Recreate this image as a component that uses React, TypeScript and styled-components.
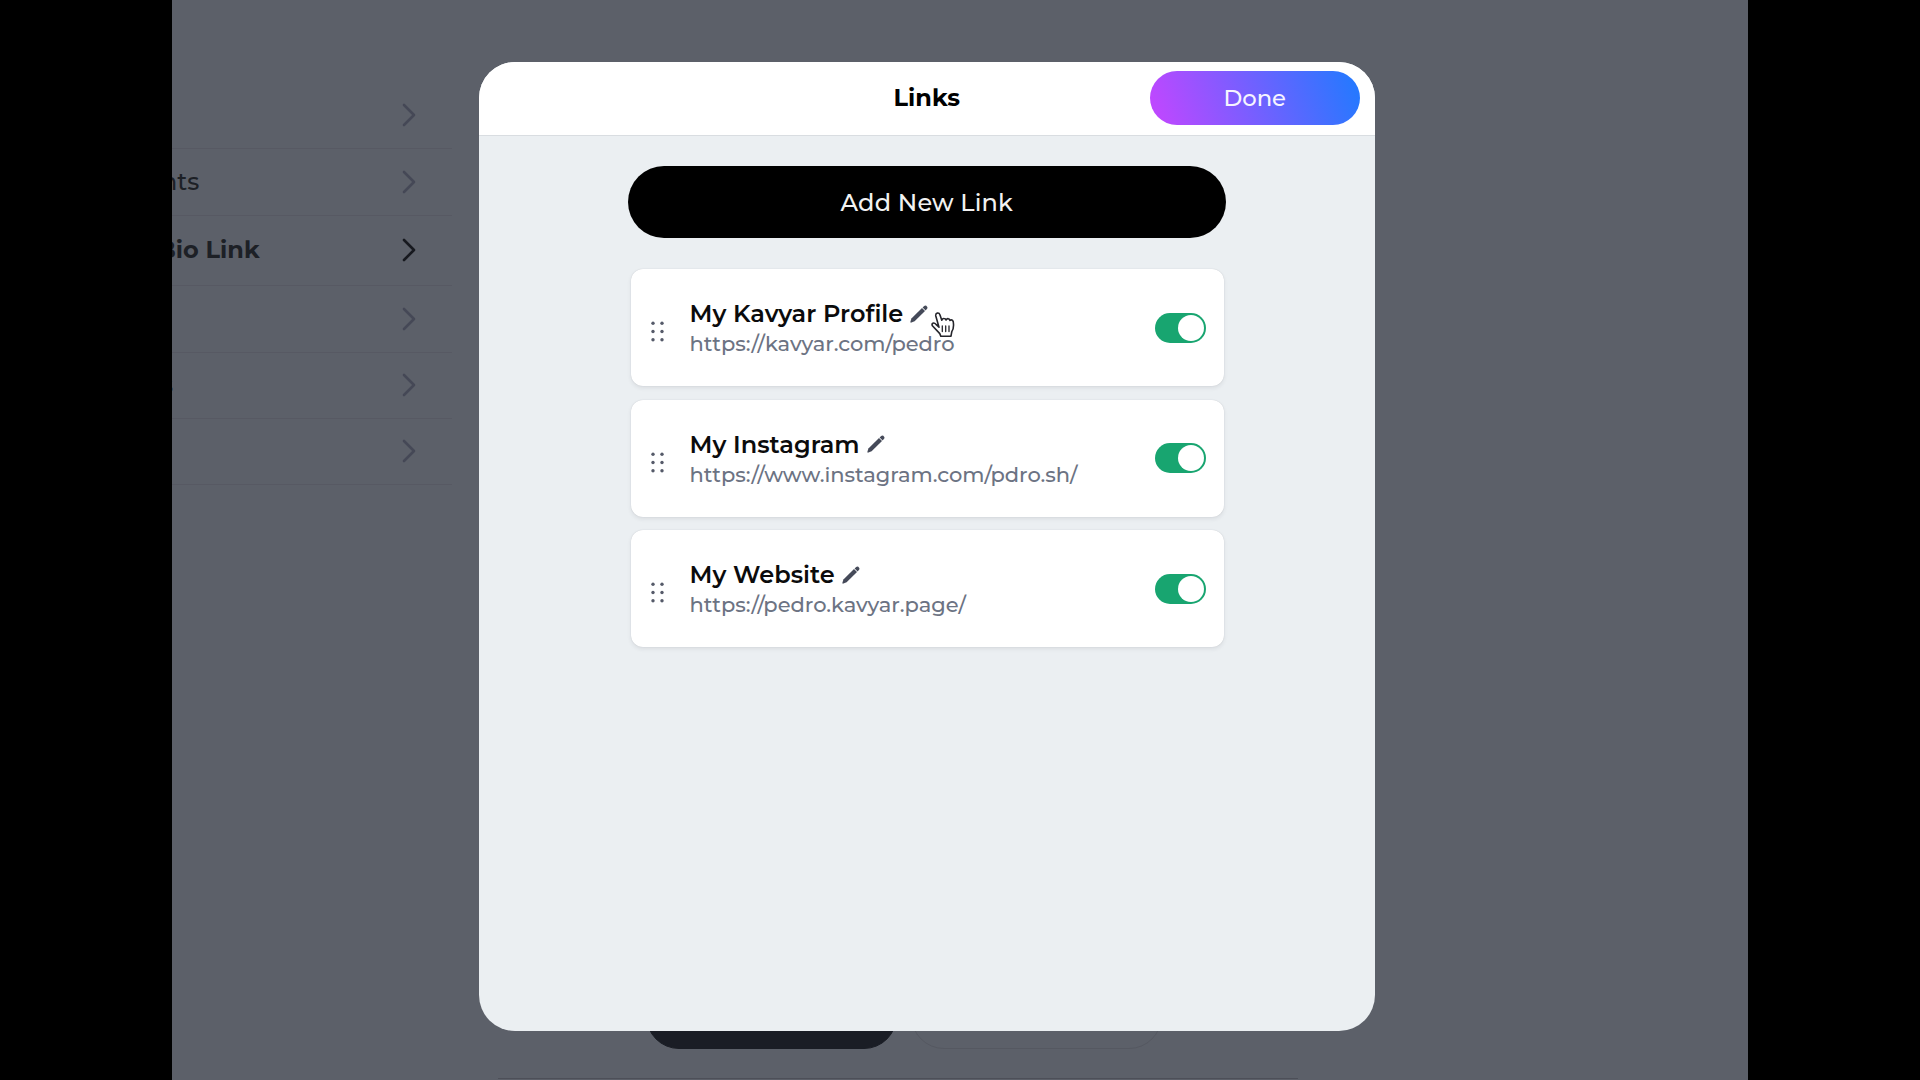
import styled, {createGlobalStyle, css} from "styled-components";

const theme = {
    colors: {
        backdrop: "#5c6069",
        backdropLine: "#575963",
        backdropText: "#1d2026",
        chevron: "#454856",
        surface: "#ebeff2",
        card: "#ffffff",
        text: "#0b0b0c",
        muted: "#6c7383",
        icon: "#454a59",
        green: "#18a570",
    },
    font: `"Montserrat", "Inter", "Liberation Sans", sans-serif`,
}

const menu = [
    {height: 67, label: ""},
    {height: 67, label: "nts", offset: -11},
    {height: 70, label: "Bio Link", offset: -14.5, active: true},
    {height: 67, label: ""},
    {height: 66, label: "s", offset: -11},
    {height: 66, label: ""},
]

const links = [
    {title: "My Kavyar Profile", url: "https://kavyar.com/pedro", cursor: true},
    {title: "My Instagram", url: "https://www.instagram.com/pdro.sh/"},
    {title: "My Website", url: "https://pedro.kavyar.page/"},
]

const Chevron = () => (
    <svg width="14" height="24" viewBox="0 0 14 24" fill="none">
        <path d="M2 2 L12 12 L2 22" stroke="currentColor" strokeWidth="2.6" strokeLinecap="round" strokeLinejoin="round"/>
    </svg>
)

const Pencil = () => (
    <svg width="18" height="18" viewBox="0 0 18 18" fill="currentColor">
        <path d="M12 3 L15 6 L4.6 16.3 L1.4 17.6 Q0.3 17.9 0.4 16.7 L1.4 13.5 Z"/>
        <path d="M12.6 2.4 L14.2 0.9 Q15.2 0 16.3 0.8 L17.1 1.7 Q18 2.8 17.1 3.8 L15.6 5.4 Z"/>
    </svg>
)

const Grip = () => (
    <svg width="13" height="21" viewBox="0 0 13 21" fill="currentColor">
        {[2.2, 10.5, 18.8].map(y => [2, 11].map(x => <circle key={`${x}-${y}`} cx={x} cy={y} r="1.7"/>))}
    </svg>
)

const HandCursor = () => (
    <svg width="24" height="26" viewBox="0 0 24 26" fill="#fff" stroke="#25252b" strokeWidth="1.6" strokeLinejoin="round" strokeLinecap="round">
        <path d="M8 15.2 L4.8 4 Q4.4 1.6 6.3 1.1 Q8.2 0.7 9 2.9 L10.8 8.2 Q11.5 6.3 13.1 6.5 Q14.5 6.6 15 8 Q16 6.3 17.4 6.7 Q18.7 7 19 8.5 Q20.3 7.4 21.5 8.4 Q22.5 9.3 22.5 12 Q22.8 16.5 20.8 19.6 L20 24.2 L9.8 24.2 L8.8 21.6 L1.4 13.8 Q0.5 12 1.9 11.2 Q3.3 10.5 5 12.3 Z"/>
        <path d="M11.3 14 L11.3 19.6 M14.7 14 L14.7 19.6 M18 14 L18 19.6" strokeWidth="1.3"/>
    </svg>
)

const App = () => {
    return (
        <Screen>
            <GlobalStyle/>
            <Stage>
                <Sidebar>
                    {menu.map((item, i) => (
                        <MenuRow key={i} $height={item.height} $active={item.active}>
                            <MenuLabel $offset={item.offset}>{item.label}</MenuLabel>
                            <Chevron/>
                        </MenuRow>
                    ))}
                </Sidebar>
                <Preview>
                    <PreviewActions>
                        <PreviewButton $filled/>
                        <PreviewButton/>
                    </PreviewActions>
                </Preview>
            </Stage>
            <Overlay>
                <Modal>
                    <ModalHeader>
                        <ModalTitle>Links</ModalTitle>
                        <DoneButton>Done</DoneButton>
                    </ModalHeader>
                    <ModalBody>
                        <AddButton>Add New Link</AddButton>
                        <LinkList>
                            {links.map(link => (
                                <LinkCard key={link.title}>
                                    <GripHandle><Grip/></GripHandle>
                                    <LinkInfo>
                                        <LinkTitle>
                                            {link.title}
                                            <EditButton><Pencil/></EditButton>
                                        </LinkTitle>
                                        <LinkUrl>{link.url}</LinkUrl>
                                    </LinkInfo>
                                    <Toggle><Knob/></Toggle>
                                    {link.cursor && <Pointer><HandCursor/></Pointer>}
                                </LinkCard>
                            ))}
                        </LinkList>
                    </ModalBody>
                </Modal>
            </Overlay>
        </Screen>
    );
};

export default App;

const GlobalStyle = createGlobalStyle`
    *, *::before, *::after {
        box-sizing: border-box;
    }

    body {
        margin: 0;
        background: #000;
        font-family: ${theme.font};
        overflow: hidden;
    }

    svg {
        display: block;
        flex-shrink: 0;
    }

    h2, h3, p {
        margin: 0;
    }

    button {
        font-family: inherit;
        border: none;
        padding: 0;
        background: none;
    }
`

const Screen = styled.div`
    position: relative;
    width: 1920px;
    height: 1080px;
    background: #000;
`

const Stage = styled.div`
    display: flex;
    gap: 46px;
    width: 1576px;
    height: 1080px;
    margin: 0 auto;
    overflow: hidden;
    background: ${theme.colors.backdrop};
`

const Sidebar = styled.nav`
    width: 280px;
    padding-top: 81.5px;
`

const MenuRow = styled.div<{ $height: number; $active?: boolean }>`
    display: flex;
    align-items: center;
    justify-content: space-between;
    height: ${({$height}) => $height}px;
    padding-right: 36px;
    border-bottom: 1px solid ${theme.colors.backdropLine};
    font-weight: 500;
    color: ${theme.colors.chevron};

    ${({$active}) => $active && css`
        color: #17191f;
        font-weight: 700;
    `}
`

const MenuLabel = styled.span<{ $offset?: number }>`
    margin-left: ${({$offset}) => $offset ?? 0}px;
    font-size: 24px;
    line-height: 30px;
    color: ${theme.colors.backdropText};
`

const Preview = styled.div`
    display: flex;
    flex-direction: column;
    justify-content: flex-end;
    width: 800px;
    height: 1079px;
    border-bottom: 1px solid #4d4f58;
    padding-bottom: 29px;
`

const PreviewActions = styled.div`
    display: flex;
    gap: 14px;
    padding-left: 148px;
`

const PreviewButton = styled.div<{ $filled?: boolean }>`
    width: 251px;
    height: 66px;
    border-radius: 33px;
    border: 1px solid ${({$filled}) => $filled ? "#1a1d25" : "#555861"};
    background: ${({$filled}) => $filled ? "#1a1d25" : "transparent"};
`

const Overlay = styled.div`
    position: absolute;
    inset: 0;
    padding: 61.5px 0 0 479px;
`

const Modal = styled.section`
    width: 895.5px;
    height: 969.5px;
    border-radius: 36px;
    overflow: hidden;
    background: ${theme.colors.surface};
`

const ModalHeader = styled.header`
    display: grid;
    grid-template-columns: 1fr auto 1fr;
    align-items: center;
    height: 74px;
    padding-right: 15px;
    border-bottom: 1px solid #d9dde1;
    background: #fff;
`

const ModalTitle = styled.h2`
    grid-column: 2;
    padding-left: 15px;
    font-size: 24px;
    line-height: 30px;
    font-weight: 700;
    color: #000;
`

const DoneButton = styled.button`
    justify-self: end;
    width: 209.5px;
    height: 54px;
    border-radius: 27px;
    background: linear-gradient(70deg, #bd48ff 5%, #2778ff 95%);
    color: #f6f4ff;
    font-size: 22.7px;
    font-weight: 500;
`

const ModalBody = styled.div`
    display: flex;
    flex-direction: column;
    align-items: center;
    padding-top: 30.5px;
`

const AddButton = styled.button`
    width: 597.5px;
    height: 71.5px;
    padding-top: 1px;
    border-radius: 36px;
    background: #000;
    color: #f2f2f2;
    font-size: 24px;
    font-weight: 500;
    letter-spacing: 0.15px;
`

const LinkList = styled.div`
    display: flex;
    flex-direction: column;
    gap: 13.5px;
    width: 593px;
    margin: 31.5px 0 0 2px;
`

const LinkCard = styled.article`
    position: relative;
    display: flex;
    align-items: center;
    height: 117px;
    padding: 0 18.5px 0 20px;
    border-radius: 12px;
    background: ${theme.colors.card};
    box-shadow: 0 2px 4px rgba(40, 45, 60, 0.09), 0 0 1px rgba(40, 45, 60, 0.2);
`

const GripHandle = styled.div`
    margin-top: 8px;
    color: #555a69;
`

const LinkInfo = styled.div`
    flex: 1;
    margin-left: 25.3px;
    padding-top: 2px;
`

const LinkTitle = styled.h3`
    display: flex;
    align-items: center;
    font-size: 24px;
    line-height: 30px;
    font-weight: 600;
    letter-spacing: 0.03px;
    color: ${theme.colors.text};
`

const EditButton = styled.button`
    margin: 0 0 1px 7px;
    color: ${theme.colors.icon};
`

const LinkUrl = styled.p`
    font-size: 21px;
    line-height: 29px;
    font-weight: 500;
    letter-spacing: -0.02px;
    color: ${theme.colors.muted};
`

const Toggle = styled.div`
    display: flex;
    align-items: center;
    justify-content: flex-end;
    width: 51px;
    height: 30px;
    padding-right: 2px;
    border-radius: 15px;
    background: ${theme.colors.green};
`

const Knob = styled.div`
    width: 26px;
    height: 26px;
    border-radius: 50%;
    background: #fff;
`

const Pointer = styled.div`
    position: absolute;
    left: 300px;
    top: 43px;
`
